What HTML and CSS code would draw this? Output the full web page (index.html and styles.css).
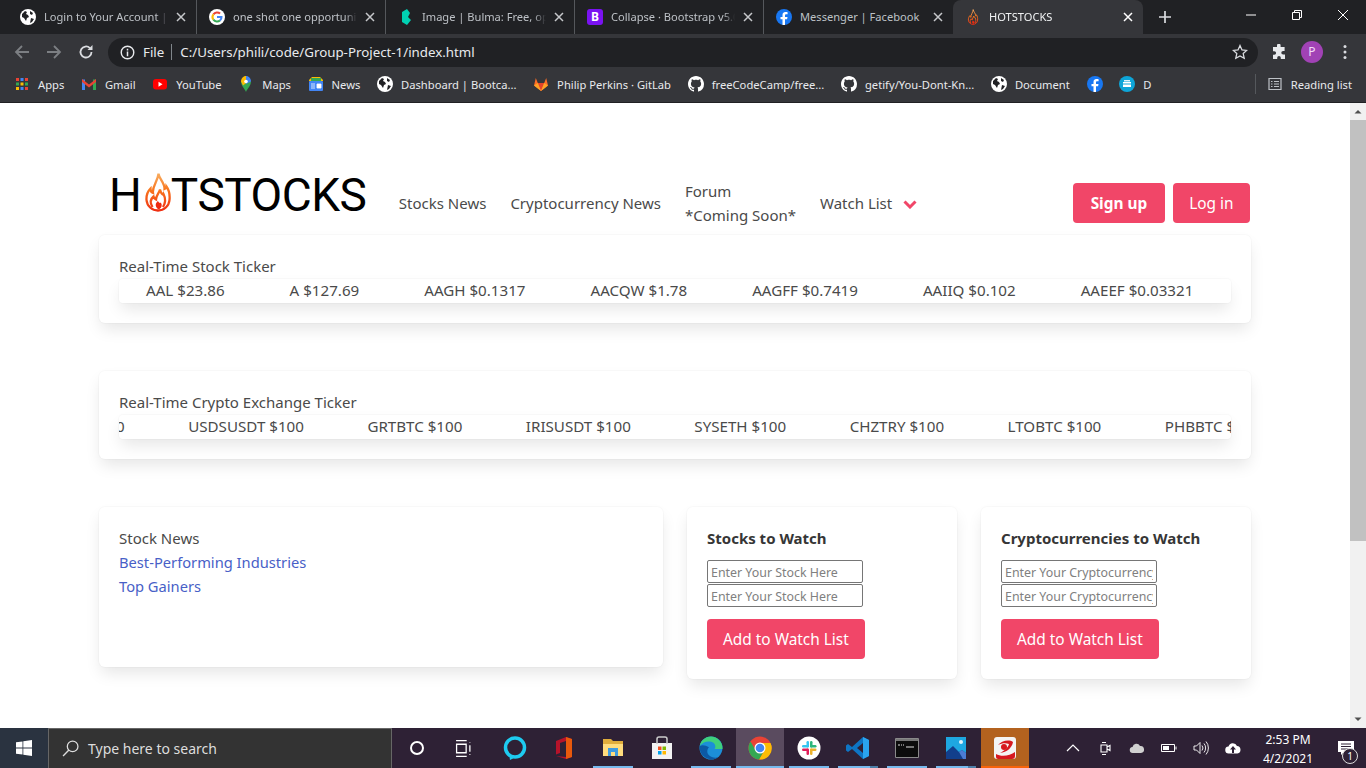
FILE: index.html
```html
<!DOCTYPE html>
<html lang="en">
<head>
    <meta charset="UTF-8">
    <title>HOTSTOCKS</title>
    <link rel="stylesheet" href="styles.css">
</head>
<body>
    <svg class="sprites" width="0" height="0">
        <defs>
            <linearGradient id="flameGrad" gradientUnits="userSpaceOnUse" x1="0" y1="0" x2="0" y2="40">
                <stop offset="0" stop-color="#f7b267"/>
                <stop offset="0.45" stop-color="#f9761e"/>
                <stop offset="1" stop-color="#ee2a10"/>
            </linearGradient>
            <symbol id="flame" viewBox="0 0 26 40">
                <g fill="none" stroke="url(#flameGrad)" stroke-width="2.300">
                    <path d="M13.500 1.500C14 7 20 11 19.500 17c1.500-.5 2-1.500 2-2.500 2.500 3.500 3.500 8.500 3 13.500-.5 6-5.500 10.500-11.500 10.500S2 34 1.500 28c-.3-5 1.500-9 4-11.500 0 2.500 1 4 2.500 4.500-1-7 5-12 5.500-19.500z"/>
                    <path d="M7.500 35c-2.500-4-2-8 1-10.500.5 2 1.500 2.500 2.500 3 0-4 3-6 4-10 1 4 3 6 3.500 4.500 2 4 2 9-.5 13"/>
                </g>
                <path fill="#ee2a10" d="M13 37c-3.500-3-2.500-6 0-8 .5 1.500 2 2.500 2.800 1.500 1.700 2.500 1 5-1.300 6.500z"/>
            </symbol>
            <symbol id="globe" viewBox="0 0 16 16">
                <circle cx="8" cy="8" r="8" fill="#fff"/>
                <path fill="#202124" d="M2 5l3-3 2 1-1 2 2 1 1 2-2 1-1 3-2-3-2-1zM10 2l3 2-1 2-2-1zM11 9l3 1-2 3-2 1z"/>
            </symbol>
            <symbol id="github" viewBox="0 0 16 16">
                <path fill="#fff" d="M8 0C3.580 0 0 3.580 0 8c0 3.540 2.290 6.530 5.470 7.590.4.070.55-.17.55-.38 0-.19-.01-.82-.01-1.490-2.010.37-2.530-.49-2.690-.94-.09-.23-.48-.94-.82-1.130-.28-.15-.68-.52-.01-.53.63-.01 1.080.58 1.230.82.72 1.210 1.870.87 2.330.66.070-.52.28-.87.51-1.070-1.780-.2-3.640-.89-3.640-3.950 0-.87.310-1.590.820-2.150-.08-.2-.36-1.020.08-2.120 0 0 .67-.21 2.200.82.640-.18 1.320-.27 2-.27s1.360.09 2 .27c1.530-1.040 2.200-.82 2.200-.82.440 1.100.160 1.920.080 2.120.510.560.820 1.270.820 2.150 0 3.070-1.870 3.750-3.650 3.950.290.250.540.730.540 1.480 0 1.070-.010 1.930-.010 2.200 0 .210.150.460.550.380A8.010 8.010 0 0 0 16 8c0-4.420-3.580-8-8-8z"/>
            </symbol>
            <symbol id="facebook" viewBox="0 0 16 16">
                <circle cx="8" cy="8" r="8" fill="#1877f2"/>
                <path fill="#fff" d="M11.100 10.300l.4-2.300H9V6.500c0-.7.300-1.200 1.300-1.200h1.300V3.300S10.500 3.100 9.400 3.100C7.300 3.100 6.500 4.400 6.500 6.200V8H4.500v2.300h2V16h2.500v-5.700z"/>
            </symbol>
            <symbol id="close" viewBox="0 0 10 10">
                <path d="M1 1l8 8M9 1l-8 8" fill="none" stroke="currentColor" stroke-width="1.500"/>
            </symbol>
        </defs>
    </svg>

    <div class="tabstrip">
        <div class="tab">
            <svg class="fav"><use href="#globe"/></svg>
            <span class="tab-title">Login to Your Account | Bulma</span>
            <svg class="tab-x"><use href="#close"/></svg>
        </div>
        <div class="tab">
            <svg class="fav" viewBox="0 0 16 16">
                <circle cx="8" cy="8" r="8" fill="#fff"/>
                <path d="M4.400 5.300A4.500 4.500 0 0 1 11.100 4.600" fill="none" stroke="#ea4335" stroke-width="2"/>
                <path d="M4.400 5.300a4.600 4.600 0 0 0 0 5.400" fill="none" stroke="#fbbc05" stroke-width="2"/>
                <path d="M4.400 10.700a4.600 4.600 0 0 0 6.600.8" fill="none" stroke="#34a853" stroke-width="2"/>
                <path d="M11 11.500A4.500 4.500 0 0 0 12.500 8H8" fill="none" stroke="#4285f4" stroke-width="2"/>
            </svg>
            <span class="tab-title">one shot one opportunity - Google</span>
            <svg class="tab-x"><use href="#close"/></svg>
        </div>
        <div class="tab">
            <svg class="fav" viewBox="0 0 16 16">
                <path fill="#00d1b2" d="M4 3l5-3 3 4-2 4 3 3-4 5-5-3z"/>
            </svg>
            <span class="tab-title">Image | Bulma: Free, open source</span>
            <svg class="tab-x"><use href="#close"/></svg>
        </div>
        <div class="tab">
            <span class="fav fav-boot">B</span>
            <span class="tab-title">Collapse · Bootstrap v5.0 docs</span>
            <svg class="tab-x"><use href="#close"/></svg>
        </div>
        <div class="tab tab-last">
            <svg class="fav"><use href="#facebook"/></svg>
            <span class="tab-title tab-title-full">Messenger | Facebook</span>
            <svg class="tab-x"><use href="#close"/></svg>
        </div>
        <div class="tab tab-active">
            <svg class="fav"><use href="#flame"/></svg>
            <span class="tab-title">HOTSTOCKS</span>
            <svg class="tab-x"><use href="#close"/></svg>
        </div>
        <svg class="new-tab" viewBox="0 0 12 12"><path d="M6 0v12M0 6h12" stroke="#dadce0" stroke-width="1.700"/></svg>
        <div class="win-controls">
            <svg viewBox="0 0 46 30"><path d="M18 15h10" stroke="#fff"/></svg>
            <svg viewBox="0 0 46 30"><path d="M18.500 12.500h7v7h-7zM20.500 12.500v-2h7v7h-2" fill="none" stroke="#fff"/></svg>
            <svg viewBox="0 0 46 30"><path d="M18 10l10 10M28 10L18 20" stroke="#fff"/></svg>
        </div>
    </div>

    <div class="toolbar">
        <svg class="tool-btn" viewBox="0 0 16 16"><path d="M15 8H2M8 2L2 8l6 6" fill="none" stroke="#7c7f83" stroke-width="1.800"/></svg>
        <svg class="tool-btn" viewBox="0 0 16 16"><path d="M1 8h13M8 2l6 6-6 6" fill="none" stroke="#7c7f83" stroke-width="1.800"/></svg>
        <svg class="tool-btn" viewBox="0 0 16 16"><path d="M13.500 8a5.500 5.500 0 1 1-1.600-3.900" fill="none" stroke="#dadce0" stroke-width="1.800"/><path d="M14.500 1v5h-5z" fill="#dadce0"/></svg>
        <div class="omnibox">
            <svg class="info" viewBox="0 0 16 16"><circle cx="8" cy="8" r="6.700" fill="none" stroke="#e8eaed" stroke-width="1.500"/><path d="M8 7v5M8 4v1.800" stroke="#e8eaed" stroke-width="1.600"/></svg>
            <span class="scheme">File</span>
            <span class="url">C:/Users/phili/code/Group-Project-1/index.html</span>
            <svg class="star" viewBox="0 0 16 16"><path d="M8 1.500l2 4.400 4.700.5-3.500 3.200 1 4.700L8 11.900l-4.200 2.400 1-4.700L1.300 6.400 6 5.900z" fill="none" stroke="#dadce0" stroke-width="1.300"/></svg>
        </div>
        <svg class="puzzle" viewBox="0 0 16 16"><path fill="#e8eaed" d="M6 1.500a1.800 1.800 0 0 1 3.600 0V3h4v4h-1.500a1.800 1.800 0 0 0 0 3.600H14V15H9.800v-1.300a1.800 1.800 0 0 0-3.600 0V15H2v-4.200h1.300a1.800 1.800 0 0 0 0-3.600H2V3h4z"/></svg>
        <span class="avatar">P</span>
        <svg class="kebab" viewBox="0 0 4 16"><circle cx="2" cy="2.500" r="1.500" fill="#dadce0"/><circle cx="2" cy="8" r="1.500" fill="#dadce0"/><circle cx="2" cy="13.500" r="1.500" fill="#dadce0"/></svg>
    </div>

    <div class="bookmarks">
        <span class="bm">
            <svg class="bm-icon" viewBox="0 0 16 16">
                <path fill="#ea4335" d="M2 2h3v3H2z"/><path fill="#4285f4" d="M6.500 2h3v3h-3z"/><path fill="#ea4335" d="M11 2h3v3h-3z"/>
                <path fill="#34a853" d="M2 6.500h3v3H2z"/><path fill="#fbbc05" d="M6.500 6.500h3v3h-3z"/><path fill="#34a853" d="M11 6.500h3v3h-3z"/>
                <path fill="#fbbc05" d="M2 11h3v3H2z"/><path fill="#4285f4" d="M6.500 11h3v3h-3z"/><path fill="#ea4335" d="M11 11h3v3h-3z"/>
            </svg>Apps</span>
        <span class="bm">
            <svg class="bm-icon" viewBox="0 0 16 16">
                <path fill="#4285f4" d="M1 3.500h3V14H1z"/><path fill="#34a853" d="M12 3.500h3V14h-3z"/>
                <path fill="#ea4335" d="M1 3l7 5.500L15 3v3L8 11.500 1 6z"/>
            </svg>Gmail</span>
        <span class="bm">
            <svg class="bm-icon" viewBox="0 0 16 16"><rect x="1" y="3" width="14" height="10.500" rx="3" fill="#f00"/><path d="M6.500 5.800v5l4-2.500z" fill="#fff"/></svg>YouTube</span>
        <span class="bm">
            <svg class="bm-icon" viewBox="0 0 16 16">
                <path fill="#34a853" d="M8 16c-1-3-5-6-5-10.500h10C13 10 9 13 8 16z"/>
                <path fill="#fbbc05" d="M3 5.500C3 2.500 5 0 8 0l2 5.500-5 4z"/>
                <path fill="#4285f4" d="M8 0c3 0 5 2.500 5 5.500L8 8z"/>
                <circle cx="8" cy="5.500" r="1.800" fill="#fff"/>
            </svg>Maps</span>
        <span class="bm">
            <svg class="bm-icon" viewBox="0 0 16 16">
                <path fill="#fbbc05" d="M1 4l3-3h8l3 3v1H1z"/><path fill="#34a853" d="M3 2h10v3H3z"/>
                <rect x="1" y="5" width="14" height="10" rx="1" fill="#4285f4"/>
                <path d="M3 8h4M3 10h4M3 12h4M9 8h4v4H9z" stroke="#fff" fill="#fff" stroke-width=".8"/>
            </svg>News</span>
        <span class="bm"><svg class="bm-icon"><use href="#globe"/></svg>Dashboard | Bootca...</span>
        <span class="bm">
            <svg class="bm-icon" viewBox="0 0 16 16">
                <path fill="#fc6d26" d="M8 15L1 9.500 2.800 2l2 5h6.400l2-5L15 9.500z"/>
                <path fill="#e24329" d="M8 15L4.800 7h6.400z"/>
                <path fill="#fca326" d="M1 9.500L4.800 7 8 15zM15 9.500L11.200 7 8 15z"/>
            </svg>Philip Perkins · GitLab</span>
        <span class="bm"><svg class="bm-icon"><use href="#github"/></svg>freeCodeCamp/free...</span>
        <span class="bm"><svg class="bm-icon"><use href="#github"/></svg>getify/You-Dont-Kn...</span>
        <span class="bm"><svg class="bm-icon"><use href="#globe"/></svg>Document</span>
        <span class="bm"><svg class="bm-icon"><use href="#facebook"/></svg></span>
        <span class="bm">
            <svg class="bm-icon" viewBox="0 0 16 16"><circle cx="8" cy="8" r="8" fill="#0ea5d8"/><path d="M4 6h8v5H4z" fill="#fff"/><path d="M5 4h6v1.500H5z" fill="#dff3fb"/><path d="M4 8h8" stroke="#0ea5d8"/></svg>D</span>
        <span class="bm-reading">
            <svg class="bm-icon" viewBox="0 0 16 16"><path d="M2 2.500h12v11H2z" fill="none" stroke="#bdc1c6" stroke-width="1.200"/><path d="M4 5.500h1.500M4 8h1.500M4 10.500h1.500M7 5.500h5M7 8h5M7 10.500h5" stroke="#bdc1c6"/></svg>Reading list</span>
    </div>

    <div class="viewport">
        <main class="page">
            <nav class="navbar">
                <a class="logo"><span class="logo-text">H</span><svg class="logo-flame"><use href="#flame"/></svg><span class="logo-text logo-rest">TSTOCKS</span></a>
                <a class="nav-item">Stocks News</a>
                <a class="nav-item">Cryptocurrency News</a>
                <a class="nav-item">Forum<br>*Coming Soon*</a>
                <a class="nav-item">Watch List
                    <svg class="chevron" viewBox="0 0 14 9"><path d="M1.500 1.500L7 7l5.500-5.500" fill="none" stroke="#f14668" stroke-width="3"/></svg>
                </a>
                <div class="nav-buttons">
                    <a class="btn btn-strong">Sign up</a>
                    <a class="btn">Log in</a>
                </div>
            </nav>

            <section class="box">
                <p>Real-Time Stock Ticker</p>
                <div class="ticker">
                    <div class="ticker-track stock-track">
                        <span>AAL $23.86</span>
                        <span>A $127.69</span>
                        <span>AAGH $0.1317</span>
                        <span>AACQW $1.78</span>
                        <span>AAGFF $0.7419</span>
                        <span>AAIIQ $0.102</span>
                        <span>AAEEF $0.03321</span>
                    </div>
                </div>
            </section>

            <section class="box">
                <p>Real-Time Crypto Exchange Ticker</p>
                <div class="ticker">
                    <div class="ticker-track crypto-track">
                        <span>$100</span>
                        <span>USDSUSDT $100</span>
                        <span>GRTBTC $100</span>
                        <span>IRISUSDT $100</span>
                        <span>SYSETH $100</span>
                        <span>CHZTRY $100</span>
                        <span>LTOBTC $100</span>
                        <span>PHBBTC $100</span>
                    </div>
                </div>
            </section>

            <div class="columns">
                <section class="box news-box">
                    <p>Stock News</p>
                    <a class="news-link">Best-Performing Industries</a>
                    <a class="news-link">Top Gainers</a>
                </section>
                <section class="box">
                    <h3>Stocks to Watch</h3>
                    <input class="watch-input" placeholder="Enter Your Stock Here">
                    <input class="watch-input" placeholder="Enter Your Stock Here">
                    <a class="btn watch-btn">Add to Watch List</a>
                </section>
                <section class="box">
                    <h3>Cryptocurrencies to Watch</h3>
                    <input class="watch-input" placeholder="Enter Your Cryptocurrency Here">
                    <input class="watch-input" placeholder="Enter Your Cryptocurrency Here">
                    <a class="btn watch-btn">Add to Watch List</a>
                </section>
            </div>
        </main>
        <div class="scrollbar">
            <svg class="scroll-arrow" viewBox="0 0 16 16"><path d="M4.500 10L8 6.500l3.500 3.500z" fill="#505050"/></svg>
            <div class="scroll-thumb"></div>
            <svg class="scroll-arrow scroll-arrow-down" viewBox="0 0 16 16"><path d="M4.500 6L8 9.500 11.500 6z" fill="#505050"/></svg>
        </div>
    </div>

    <footer class="taskbar">
        <div class="start">
            <svg viewBox="0 0 16 16"><path fill="#fff" d="M0 2.300l6.500-.9v6.200H0zM7.300 1.300L16 0v7.600H7.300zM0 8.400h6.500v6.200L0 13.700zM7.300 8.400H16V16l-8.700-1.300z"/></svg>
        </div>
        <div class="search">
            <svg viewBox="0 0 16 16"><circle cx="10" cy="6" r="5" fill="none" stroke="#ddd" stroke-width="1.200"/><path d="M6.500 9.500L1 15" stroke="#ddd" stroke-width="1.300"/></svg>
            <span>Type here to search</span>
        </div>
        <div class="task"><svg viewBox="0 0 16 16"><circle cx="8" cy="8" r="6" fill="none" stroke="#fff" stroke-width="2"/></svg></div>
        <div class="task"><svg viewBox="0 0 16 16"><path d="M1 .5h10M1 15.500h10M1.500 4h9v8h-9zM14 2v.5M14 5v6M14 13.500v.5" fill="none" stroke="#fff" stroke-width="1.200"/></svg></div>
        <div class="task"><svg viewBox="0 0 24 24"><circle cx="12" cy="11.500" r="9.500" fill="none" stroke="#1ecbf0" stroke-width="3.500"/><path d="M6 18l1 6 6-3z" fill="#1ecbf0"/></svg></div>
        <div class="task"><svg viewBox="0 0 24 24"><path d="M4 5l10-4 6 2v18l-6 2-10-3 10 1V5L8 7v10l-4 1.500z" fill="#b7132a"/><path d="M14 1l6 2v18l-6 2z" fill="#e8590c"/></svg></div>
        <div class="task task-on"><svg viewBox="0 0 24 24"><path d="M2 3h8l2 2h10v15H2z" fill="#e0ad3c"/><path d="M2 8h20v12H2z" fill="#ffdc7d"/><path d="M7 12h10v8h-3v-4h-4v4H7z" fill="#3f9be0"/></svg></div>
        <div class="task"><svg viewBox="0 0 24 24"><path d="M2 7h20v16H2z" fill="#f3f3f3"/><path d="M7 8V3a2 2 0 0 1 2-2h6a2 2 0 0 1 2 2v5" fill="none" stroke="#ccc" stroke-width="1.500"/><path d="M8 10.500h3.500V14H8z" fill="#f25022"/><path d="M12.500 10.500H16V14h-3.500z" fill="#7fba00"/><path d="M8 15h3.500v3.500H8z" fill="#00a4ef"/><path d="M12.500 15H16v3.500h-3.500z" fill="#ffb900"/></svg></div>
        <div class="task task-on"><svg viewBox="0 0 24 24"><circle cx="12" cy="12" r="11.500" fill="#1c8fd8"/><path d="M23.500 13C24 6 18 .5 12 .5 6 .5 1.500 5 .8 10c2-3 6-5 10-4.500 4 .5 6 3 5.500 6-.2 1-1 1.500-1.500 1.500z" fill="#3fd07c"/><path d="M.8 10C0 16 4 22 11 23.300c3 .5 6-.5 8-2-3 1-7 0-9-2-2.500-2.500-2-6 0-8-3-2-7-3-9.200-1.300z" fill="#0c59a4"/></svg></div>
        <div class="task task-on task-current"><svg viewBox="0 0 24 24"><circle cx="12" cy="12" r="11.500" fill="#ea4335"/><path d="M12 7h10.500A11.500 11.500 0 0 1 11 23.500L16.500 14z" fill="#fbbc05"/><path d="M2.500 5.500A11.500 11.500 0 0 0 11 23.500l5.500-9.500-9 0z" fill="#34a853"/><circle cx="12" cy="12" r="5.500" fill="#fff"/><circle cx="12" cy="12" r="4.300" fill="#4285f4"/></svg></div>
        <div class="task task-on"><svg viewBox="0 0 24 24"><circle cx="12" cy="12" r="11.500" fill="#fff"/><rect x="9.500" y="5" width="2.500" height="6.500" rx="1.200" fill="#36c5f0"/><rect x="5" y="9" width="6.500" height="2.500" rx="1.200" fill="#36c5f0"/><rect x="13" y="5" width="2.500" height="6.500" rx="1.200" fill="#2eb67d"/><rect x="13" y="9" width="6.500" height="2.500" rx="1.200" fill="#2eb67d"/><rect x="13" y="12.500" width="6.500" height="2.500" rx="1.200" fill="#ecb22e"/><rect x="13" y="12.500" width="2.500" height="6.500" rx="1.200" fill="#ecb22e"/><rect x="5" y="12.500" width="6.500" height="2.500" rx="1.200" fill="#e01e5a"/><rect x="9.500" y="12.500" width="2.500" height="6.500" rx="1.200" fill="#e01e5a"/></svg></div>
        <div class="task task-on task-stack"><svg viewBox="0 0 24 24"><path d="M17 1l6 3v16l-6 3L6 13l-4 3-2-1.500v-5L2 8l4 3z" fill="#0e75c4"/><path d="M17 7l-6 5 6 5z" fill="#2e2135"/><path d="M17 1l6 3v16l-6 3z" fill="#2aa4ef"/></svg></div>
        <div class="task task-on"><svg viewBox="0 0 24 24"><path d="M.5 2.500h23v19H.5z" fill="#0c0c0c" stroke="#8a8a8a"/><path d="M1 3h22v2H1z" fill="#777"/><path d="M3 9h2M6 9h1M8 9h1M11 11h8" stroke="#ddd" stroke-width="1.200"/></svg></div>
        <div class="task task-on task-stack"><svg viewBox="0 0 24 24"><path d="M2 1h20v22H2z" fill="#1ea7e1"/><path d="M2 23v-7l7-6 6 6 3-2 4 3v6z" fill="#123f8c"/><path d="M15 16l3-2 4 3v6h-3z" fill="#4c7cd4"/><circle cx="17" cy="6" r="2" fill="#dff3fb"/></svg></div>
        <div class="task task-orange"><svg viewBox="0 0 24 24"><rect x="1" y="1" width="22" height="22" rx="3" fill="#f4f4f4"/><path d="M3 18c5 3 14 2 19-2v4a3 3 0 0 1-3 3H5a2 2 0 0 1-2-2z" fill="#d71920"/><path d="M5 9c3-4 11-6 15-3-1 6-6 10-13 11 4-2 8-5 9-9-3-1-7-1-11 1z" fill="#d71920"/><circle cx="11" cy="11" r="3" fill="#d71920"/></svg></div>

        <div class="tray">
            <svg class="tray-icon" viewBox="0 0 16 16"><path d="M2 11l6-6 6 6" fill="none" stroke="#fff" stroke-width="1.200"/></svg>
            <svg class="tray-icon" viewBox="0 0 16 16"><path d="M4 5h6v7H4zM10 7l3-1.500v5L10 9zM5 2.500h4M5 14.500h4" fill="none" stroke="#fff" stroke-width="1.100"/></svg>
            <svg class="tray-icon" viewBox="0 0 16 16"><path d="M4 13a3 3 0 0 1-.5-6A4 4 0 0 1 11 6a3.500 3.500 0 0 1 1 7z" fill="#d0d0d0"/></svg>
            <svg class="tray-icon" viewBox="0 0 16 16"><path d="M.5 4.500h13v7H.5z" fill="none" stroke="#fff"/><path d="M2 6h6v4H2z" fill="#fff"/><path d="M14.500 6.500h1v3h-1z" fill="#fff"/></svg>
            <svg class="tray-icon" viewBox="0 0 16 16"><path d="M1 6h2.500L7 2.500v11L3.500 10H1zM9 5.500a4 4 0 0 1 0 5M11 3.500a7 7 0 0 1 0 9M13 1.500a10 10 0 0 1 0 13" fill="none" stroke="#fff" stroke-width=".9"/></svg>
            <svg class="tray-icon" viewBox="0 0 16 16"><path d="M4 13.500a3.500 3.500 0 0 1-.5-7A4.500 4.500 0 0 1 12 6a3.800 3.800 0 0 1 .5 7.500z" fill="#fff"/><path d="M8 6l3 3.500H9V13H7V9.500H5z" fill="#2e2135"/></svg>
        </div>
        <div class="clock"><span>2:53 PM</span><span>4/2/2021</span></div>
        <div class="notify">
            <svg viewBox="0 0 16 16"><path d="M0 1h16v11H6l-3 3v-3H0z" fill="#fff"/><path d="M3 4h10M3 6.500h10M3 9h7" stroke="#2e2135"/></svg>
            <span class="notify-badge">1</span>
        </div>
    </footer>
</body>
</html>
```

FILE: styles.css
```css
* {
    box-sizing: border-box;
}

html, body {
    height: 100%;
}

body {
    margin: 0;
    display: flex;
    flex-direction: column;
    height: 768px;
    overflow: hidden;
    font-family: "Noto Sans", "Open Sans", sans-serif;
    font-size: 15px;
    color: #4a4a4a;
    background-color: #fff;
}

.sprites {
    position: absolute;
}

/* browser frame */
.tabstrip {
    display: flex;
    align-items: flex-end;
    flex: 0 0 34px;
    padding-left: 8px;
    background-color: #202124;
}

.tab {
    display: flex;
    align-items: center;
    flex: 0 0 189px;
    min-width: 0;
    height: 34px;
    padding: 0 10px 0 12px;
    gap: 8px;
    color: #bdc1c6;
    font-size: 11.100px;
    border-right: 1px solid #55585c;
}

.tab svg.fav, .fav {
    flex: 0 0 16px;
    width: 16px;
    height: 16px;
}

.fav-boot {
    background-color: #7a12f2;
    border-radius: 3px;
    color: #fff;
    font-size: 12px;
    font-weight: 700;
    line-height: 16px;
    text-align: center;
}

.tab-title {
    flex: 1;
    min-width: 0;
    padding-bottom: 2px;
    overflow: hidden;
    white-space: nowrap;
    -webkit-mask-image: linear-gradient(to right, #000 calc(100% - 12px), transparent);
    mask-image: linear-gradient(to right, #000 calc(100% - 12px), transparent);
}

.tab-title-full {
    -webkit-mask-image: none;
    mask-image: none;
}

.tab-x {
    flex: 0 0 10px;
    width: 10px;
    height: 10px;
    color: #c6c8cb;
}

.tab-last {
    border-right: none;
}

.tab-active {
    flex-basis: 190px;
    background-color: #35363a;
    border-right: none;
    border-radius: 8px 8px 0 0;
    color: #f1f3f4;
}

.tab-active .tab-x {
    color: #fff;
}

.new-tab {
    width: 12px;
    height: 12px;
    margin: 0 0 11px 16px;
}

.win-controls {
    display: flex;
    margin-left: auto;
    align-self: flex-start;
}

.win-controls svg {
    width: 46px;
    height: 30px;
}

.toolbar {
    display: flex;
    align-items: center;
    flex: 0 0 34px;
    padding: 2px 0 0 14px;
    background-color: #35363a;
}

.tool-btn {
    width: 16px;
    height: 16px;
    margin-right: 16px;
}

.omnibox {
    display: flex;
    align-items: center;
    flex: 1;
    height: 29px;
    margin-left: -2px;
    padding: 0 10px 0 12px;
    background-color: #202124;
    border-radius: 15px;
    color: #e8eaed;
    font-size: 13.300px;
}

.info {
    width: 15px;
    height: 15px;
    margin-right: 8px;
}

.scheme {
    padding-right: 7px;
    margin-right: 8px;
    line-height: 16px;
    border-right: 1px solid #80868b;
}

.star {
    width: 16px;
    height: 16px;
    margin-left: auto;
}

.puzzle {
    width: 16px;
    height: 16px;
    margin: 0 14px 0 13px;
}

.avatar {
    width: 22px;
    height: 22px;
    background-color: #a142b5;
    border-radius: 50%;
    color: #f1d9f6;
    font-size: 12px;
    line-height: 22px;
    text-align: center;
}

.kebab {
    width: 4px;
    height: 16px;
    margin: 0 19px 0 20px;
}

.bookmarks {
    display: flex;
    align-items: center;
    flex: 0 0 35px;
    padding: 0 0 2px 14px;
    gap: 16.700px;
    background-color: #35363a;
    color: #e8eaed;
    font-size: 11.200px;
    white-space: nowrap;
    border-bottom: 1px solid #202124;
}

.bm, .bm-reading {
    display: flex;
    align-items: center;
    gap: 8px;
}

.bm-reading {
    margin-left: auto;
    padding: 2px 14px 2px 11px;
    border-left: 1px solid #55585c;
}

.bm-icon {
    width: 16px;
    height: 16px;
}

/* page */
.viewport {
    display: flex;
    flex: 1;
    min-height: 0;
}

.page {
    flex: 1;
    padding: 68px 99px 0;
    overflow: hidden;
}

.navbar {
    display: flex;
    align-items: center;
    height: 64px;
}

.logo {
    display: flex;
    align-items: flex-start;
    align-self: flex-start;
    margin: 1px 20.500px 0 10px;
    color: #000;
    font-family: Roboto, sans-serif;
    font-size: 46px;
    line-height: 40px;
}

.logo-text {
    padding-top: 3px;
}

.logo-rest {
    letter-spacing: -0.5px;
}

.logo-flame {
    width: 26px;
    height: 40px;
    margin: 0 0 0 3px;
}

.nav-item {
    padding: 0 12px 1px;
    line-height: 24px;
    white-space: nowrap;
}

.chevron {
    width: 14px;
    height: 9px;
    margin-left: 7px;
}

.nav-buttons {
    display: flex;
    gap: 8px;
    margin-left: auto;
    padding-right: 1px;
}

.nav-buttons .btn {
    padding: 0 16.500px;
}

.nav-buttons .btn-strong {
    padding: 0 17.500px;
    font-weight: 700;
}

.btn {
    display: inline-block;
    height: 40px;
    padding: 0 16px;
    background-color: #f14668;
    border-radius: 4px;
    color: #fff;
    font-size: 15.400px;
    line-height: 41px;
}

.box {
    padding: 20px;
    background-color: #fff;
    border-radius: 6px;
    box-shadow: 0 8px 16px -2px rgba(10, 10, 10, 0.1), 0 0 0 1px rgba(10, 10, 10, 0.02);
    line-height: 23px;
}

.box + .box {
    margin-top: 48px;
}

.box p {
    margin: 0 0 1px;
}

.ticker {
    overflow: hidden;
    border-radius: 4px;
    box-shadow: 0 8px 16px -2px rgba(10, 10, 10, 0.1), 0 0 0 1px rgba(10, 10, 10, 0.02);
}

.ticker-track {
    display: flex;
    gap: 63.500px;
    padding-bottom: 1px;
    font-size: 15.150px;
    white-space: nowrap;
}

.stock-track {
    gap: 65px;
    padding-left: 27px;
}

.crypto-track {
    margin-left: -29px;
}

.columns {
    display: grid;
    grid-template-columns: 564px 270px 270px;
    gap: 24px;
    align-items: start;
    margin-top: 48px;
}

.columns .box + .box {
    margin-top: 0;
}

.news-box {
    height: 160px;
}

.news-link {
    display: block;
    margin-bottom: 1px;
    color: #485fc7;
    font-size: 14.700px;
}

.box h3 {
    margin: 0 0 10px;
    color: #363636;
    font-size: 15px;
    font-weight: 700;
}

.watch-input {
    display: block;
    width: 156px;
    height: 23px;
    margin-top: 1px;
    padding: 2px 3px 0;
    border: 1px solid #767676;
    border-radius: 2px;
    font-family: inherit;
    font-size: 12.400px;
}

.watch-input::placeholder {
    color: #808080;
}

.watch-btn {
    margin-top: 12px;
}

.scrollbar {
    display: flex;
    flex-direction: column;
    flex: 0 0 16px;
    background-color: #f1f1f1;
}

.scroll-arrow {
    flex: 0 0 17px;
    width: 16px;
    height: 17px;
}

.scroll-arrow-down {
    margin-top: auto;
}

.scroll-thumb {
    height: 421px;
    background-color: #c1c1c1;
}

/* windows taskbar */
.taskbar {
    display: flex;
    align-items: stretch;
    flex: 0 0 40px;
    height: 40px;
    background-color: #2e2135;
    color: #fff;
}

.start {
    display: flex;
    align-items: center;
    justify-content: center;
    flex: 0 0 48px;
    background-color: #2a3340;
}

.start svg {
    width: 16px;
    height: 16px;
}

.search {
    display: flex;
    align-items: center;
    flex: 0 0 344px;
    padding-left: 13px;
    gap: 9px;
    background-color: #333;
    border: 1px solid #666;
    border-bottom: none;
    font-size: 14px;
    color: #ddd;
}

.search svg {
    width: 17px;
    height: 17px;
}

.task {
    display: flex;
    align-items: center;
    justify-content: center;
    flex: 0 0 48px;
    margin-left: 1px;
}

.task svg {
    width: 24px;
    height: 24px;
}

.task:nth-child(3) svg {
    width: 16px;
    height: 16px;
}

.task:nth-child(4) svg {
    width: 17px;
    height: 17px;
    margin-right: 5px;
}

.task-on {
    background: linear-gradient(#76b9ed, #76b9ed) center bottom / 40px 2px no-repeat;
}

.task-stack {
    background: linear-gradient(to right, #76b9ed 80%, #4d7fa8 80%) center bottom / 40px 2px no-repeat;
}

.task-current {
    background: linear-gradient(#76b9ed, #76b9ed) center bottom / 100% 2px no-repeat, #5a4b5f;
}

.task-orange {
    background: linear-gradient(#f7630c, #f7630c) center bottom / 100% 2px no-repeat, #b3621f;
}

.tray {
    display: flex;
    align-items: center;
    margin-left: 36px;
    gap: 16px;
}

.tray-icon {
    width: 16px;
    height: 16px;
}

.clock {
    display: flex;
    flex-direction: column;
    align-items: center;
    justify-content: center;
    flex: 0 0 76px;
    margin-left: 9px;
    padding-top: 2px;
    font-size: 12px;
    line-height: 19px;
}

.notify {
    position: relative;
    display: flex;
    align-items: center;
    justify-content: center;
    flex: 1;
}

.notify svg {
    width: 16px;
    height: 16px;
}

.notify-badge {
    position: absolute;
    right: 8px;
    bottom: 4px;
    width: 16px;
    height: 16px;
    background-color: #2e2135;
    border: 1px solid #ddd;
    border-radius: 50%;
    font-size: 10px;
    line-height: 14px;
    text-align: center;
}
```
